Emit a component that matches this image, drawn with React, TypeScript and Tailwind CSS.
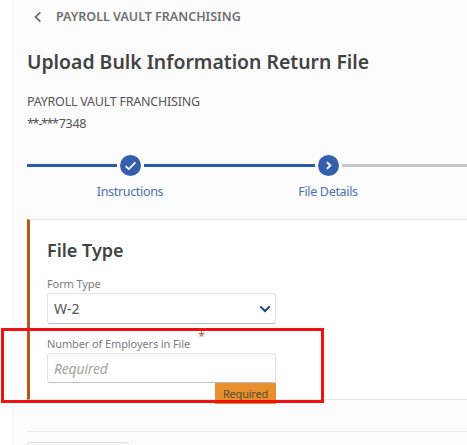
import { useState } from 'react'

const STEPS = [
  { label: 'Instructions', done: true },
  { label: 'File Details', done: false },
]

function StepIcon({ done }: { done: boolean }) {
  return (
    <svg width="21" height="21" viewBox="0 0 21 21" className="shrink-0">
      <circle cx="10.5" cy="10.5" r="10.5" fill="#335fac" />
      <path
        d={done ? 'M5.6 11.1 L8.8 14.1 L15.4 7.3' : 'M9 7.2 L12.3 10.5 L9 13.8'}
        fill="none"
        stroke="#fff"
        strokeWidth={done ? 1.7 : 1.9}
      />
    </svg>
  )
}

function Stepper() {
  return (
    <div className="mt-[20px] shrink-0">
      <div className="flex h-[21px] items-center gap-[3px]">
        <div className="h-[3px] w-[90px] bg-[#2a5aab]" />
        <StepIcon done={STEPS[0].done} />
        <div className="h-[3px] w-[171px] bg-[#2a5aab]" />
        <StepIcon done={STEPS[1].done} />
        <div className="h-[3px] flex-1 bg-[#c9c9c9]" />
      </div>
      <div className="mt-[6px] flex h-5 pl-[4px] text-[12.5px] leading-5 tracking-[-0.33px] text-[#4a6fb5]">
        {STEPS.map(s => (
          <div key={s.label} className="w-[198px] text-center">
            <span className="whitespace-nowrap">{s.label}</span>
          </div>
        ))}
      </div>
    </div>
  )
}

export default function App() {
  const [employers, setEmployers] = useState('')

  return (
    <div className="relative flex h-[445px] w-[467px] overflow-hidden bg-white font-['Noto_Sans','Open_Sans',sans-serif] text-[#555555]">
      <main className="ml-3 flex flex-1 flex-col border-l border-[#f7f7f7] bg-[#fcfcfc] pl-[14px]">
        <div className="mt-[7px] flex h-5 shrink-0 items-center pl-[7px]">
          <svg width="8" height="11" viewBox="0 0 8 11" fill="none" stroke="#666" strokeWidth="1.7">
            <path d="M6.4 0.4 L1.6 5 L6.4 9.6" />
          </svg>
          <span className="ml-[14px] pt-px text-[12.5px] font-semibold whitespace-nowrap text-[#6f6f6f]">PAYROLL VAULT FRANCHISING</span>
        </div>
        <h1 className="mt-[21px] h-7 shrink-0 text-[19.4px] leading-7 font-semibold whitespace-nowrap text-[#434343]">
          Upload Bulk Information Return File
        </h1>
        <div className="mt-[15px] shrink-0 text-[12.5px] leading-[22px]">
          <p className="tracking-[-0.23px] whitespace-nowrap">PAYROLL VAULT FRANCHISING</p>
          <p className="tracking-[-1.3px]">
            **-***<span className="ml-px tracking-[-0.25px]">7348</span>
          </p>
        </div>
        <Stepper />

        <section className="mt-[17px] flex h-[181px] shrink-0 flex-col border-y border-l-[3px] border-y-[#e4e4e4] border-l-[#b35a14] bg-white pl-[17px]">
          <h2 className="mt-[16px] h-7 text-[18px] leading-7 font-semibold text-[#434343]">File Type</h2>
          <label className="mt-[10px] h-5 text-[11px] leading-5 tracking-[-0.1px] text-[#7c7c7c]">Form Type</label>
          <button className="-mt-px flex h-[31px] w-[229px] items-center justify-between rounded-[3px] border border-[#e2e2e2] border-b-[#bdbdbd] bg-white pr-[4px] pl-[6px] text-[14px]">
            W-2
            <svg width="12" height="8" viewBox="0 0 12 8" fill="none" stroke="#173f83" strokeWidth="2">
              <path d="M1.2 1.4 L6 6 L10.8 1.4" />
            </svg>
          </button>
          <label className="mt-[10px] flex h-5 text-[11px] leading-5 text-[#7c7c7c]">
            <span className="tracking-[-0.11px] whitespace-nowrap">Number of Employers in File</span>
            <span className="-mt-[7px] ml-[8px] text-[12px] text-[#a45a42]">*</span>
          </label>
          <div className="relative -mt-px">
            <input
              value={employers}
              onChange={e => setEmployers(e.target.value)}
              placeholder="Required"
              className="block h-[30px] w-[229px] rounded-[3px] border border-[#e2e2e2] border-b-[#bdbdbd] bg-white px-[6px] text-[14px] tracking-[-0.2px] outline-none placeholder:text-[#a3a3a3] placeholder:italic"
            />
            <span className="absolute top-[30px] left-[168px] h-[21px] w-[61px] bg-[#e8902e] text-center text-[11px] leading-[21px] tracking-[-0.2px] text-[#5b4a30]">
              Required
            </span>
          </div>
        </section>

        <hr className="mt-[31px] shrink-0 border-[#e9e9e9]" />
        <div className="mt-[10px] h-7 w-[102px] shrink-0 rounded-[3px] border border-[#dedede]" />
      </main>
      <div className="absolute top-[328px] left-px h-[75px] w-[323px] border-[3px] border-[#ee1111]" />
    </div>
  )
}
